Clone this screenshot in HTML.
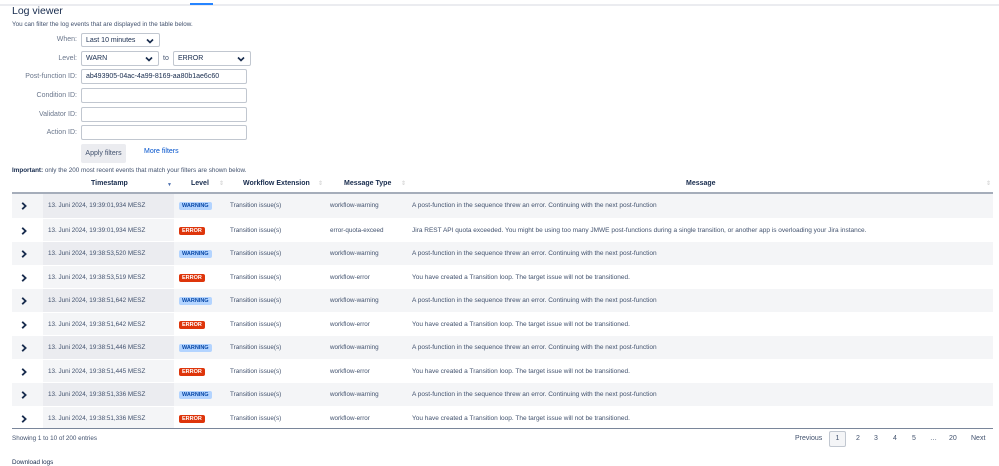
<!DOCTYPE html>
<html><head><meta charset="utf-8"><style>
*{box-sizing:border-box;margin:0;padding:0}
body{width:999px;height:464px;overflow:hidden;background:#fff;font-family:"Liberation Sans",sans-serif;color:#172b4d;position:relative;font-size:7px}
.a{position:absolute;white-space:nowrap}
.lbl{color:#6b778c;text-align:right;width:77px;left:0;font-size:7px}
.box{position:absolute;border:1px solid #c1c7d0;border-radius:2px;background:#fff;height:15px;font-size:7px;line-height:13px;padding-left:4px;color:#172b4d}
.chev{position:absolute;right:5px;top:4px;width:8px;height:6px}
.row{position:absolute;left:12px;width:981px;height:23.5px}
.row.g{background:#f4f5f7}
.row .ts{position:absolute;left:31px;width:131px;height:100%;background:#f4f5f7}
.row.g .ts{background:#ebecf0}
.row span{position:absolute;top:8px;font-size:6.3px;color:#42526e;white-space:nowrap}
.row span.m{font-size:6.5px}
.bw{background:#b3d4ff;color:#0747a6!important;font-weight:bold;padding:0 3px;top:8px!important;height:8px;line-height:8px;font-size:5.5px!important;border-radius:2px}
.be{background:#de350b;color:#fff!important;font-weight:bold;padding:0 3px;height:8px;line-height:8px;font-size:5.5px!important;border-radius:2px}
.hd{font-weight:bold;font-size:7px;color:#172b4d;top:180px}
.pg{top:435px;font-size:7px;color:#42526e}
.ar{position:absolute;left:9px;top:8px}
</style></head><body>
<div class="a" style="left:0;top:4px;width:999px;height:2px;background:#ebecf0"></div>
<div class="a" style="left:190px;top:3px;width:23px;height:2px;background:#2684ff"></div>
<div class="a" style="left:12px;top:5px;font-size:10.5px;color:#172b4d">Log viewer</div>
<div class="a" style="left:12px;top:21px;font-size:6.3px;color:#42526e">You can filter the log events that are displayed in the table below.</div>
<div class="a lbl" style="top:36px">When:</div>
<div class="box" style="left:81px;top:33px;width:79px;height:14px">Last 10 minutes<svg class="chev" viewBox="0 0 8 6"><path d="M1 1.5L4 4.5L7 1.5" fill="none" stroke="#172b4d" stroke-width="1.6"/></svg></div>
<div class="a lbl" style="top:55px">Level:</div>
<div class="box" style="left:81px;top:51px;width:78px">WARN<svg class="chev" viewBox="0 0 8 6"><path d="M1 1.5L4 4.5L7 1.5" fill="none" stroke="#172b4d" stroke-width="1.6"/></svg></div>
<div class="a" style="left:163px;top:55px;color:#42526e">to</div>
<div class="box" style="left:173px;top:51px;width:78px">ERROR<svg class="chev" viewBox="0 0 8 6"><path d="M1 1.5L4 4.5L7 1.5" fill="none" stroke="#172b4d" stroke-width="1.6"/></svg></div>
<div class="a lbl" style="top:73px">Post-function ID:</div>
<div class="box" style="left:81px;top:69px;width:166px">ab493905-04ac-4a99-8169-aa80b1ae6c60</div>
<div class="a lbl" style="top:92px">Condition ID:</div>
<div class="box" style="left:81px;top:88px;width:166px"></div>
<div class="a lbl" style="top:111px">Validator ID:</div>
<div class="box" style="left:81px;top:107px;width:166px"></div>
<div class="a lbl" style="top:129px">Action ID:</div>
<div class="box" style="left:81px;top:125px;width:166px"></div>
<div class="a" style="left:81px;top:144px;width:45px;height:19px;background:#ebecf0;border-radius:2px;text-align:center;line-height:19px;color:#42526e">Apply filters</div>
<div class="a" style="left:144px;top:148px;color:#0052cc">More filters</div>
<div class="a" style="left:12px;top:167px;font-size:6.3px;color:#42526e"><b style="color:#172b4d">Important:</b> only the 200 most recent events that match your filters are shown below.</div>
<div class="a hd" style="left:91px">Timestamp</div><div class="a" style="left:167px;top:182px;font-size:5px;color:#4c6fae">▼</div>
<div class="a hd" style="left:191px">Level</div><div class="a" style="left:219px;top:180px;color:#ccc;font-size:6px">⇕</div>
<div class="a hd" style="left:243px">Workflow Extension</div><div class="a" style="left:318px;top:180px;color:#ccc;font-size:6px">⇕</div>
<div class="a hd" style="left:344px">Message Type</div><div class="a" style="left:401px;top:180px;color:#ccc;font-size:6px">⇕</div>
<div class="a hd" style="left:686px">Message</div><div class="a" style="left:986px;top:180px;color:#ccc;font-size:6px">⇕</div>
<div class="a" style="left:12px;top:192px;width:981px;height:2px;background:#a5adba"></div>
<div id="rows"></div>
<div class="a" style="left:12px;top:428px;width:981px;height:1px;background:#7a869a"></div>
<div class="a" style="left:12px;top:435px;font-size:6.3px;color:#42526e">Showing 1 to 10 of 200 entries</div>
<div class="a" style="left:12px;top:459px;font-size:6.3px;color:#172b4d">Download logs</div>
<div class="a pg" style="left:795px">Previous</div>
<div class="a" style="left:829px;top:431px;width:17px;height:16px;border:1px solid #c1c7d0;background:#f4f5f7;border-radius:2px;text-align:center;line-height:14px;color:#42526e">1</div>
<div class="a pg" style="left:856px">2</div><div class="a pg" style="left:874px">3</div><div class="a pg" style="left:893px">4</div><div class="a pg" style="left:912px">5</div><div class="a pg" style="left:930px">…</div><div class="a pg" style="left:949px">20</div><div class="a pg" style="left:971px">Next</div>
<script>
var d=[["13. Juni 2024, 19:39:01,934 MESZ","W","workflow-warning","A post-function in the sequence threw an error. Continuing with the next post-function"],
["13. Juni 2024, 19:39:01,934 MESZ","E","error-quota-exceed","Jira REST API quota exceeded. You might be using too many JMWE post-functions during a single transition, or another app is overloading your Jira instance."],
["13. Juni 2024, 19:38:53,520 MESZ","W","workflow-warning","A post-function in the sequence threw an error. Continuing with the next post-function"],
["13. Juni 2024, 19:38:53,519 MESZ","E","workflow-error","You have created a Transition loop. The target issue will not be transitioned."],
["13. Juni 2024, 19:38:51,642 MESZ","W","workflow-warning","A post-function in the sequence threw an error. Continuing with the next post-function"],
["13. Juni 2024, 19:38:51,642 MESZ","E","workflow-error","You have created a Transition loop. The target issue will not be transitioned."],
["13. Juni 2024, 19:38:51,446 MESZ","W","workflow-warning","A post-function in the sequence threw an error. Continuing with the next post-function"],
["13. Juni 2024, 19:38:51,445 MESZ","E","workflow-error","You have created a Transition loop. The target issue will not be transitioned."],
["13. Juni 2024, 19:38:51,336 MESZ","W","workflow-warning","A post-function in the sequence threw an error. Continuing with the next post-function"],
["13. Juni 2024, 19:38:51,336 MESZ","E","workflow-error","You have created a Transition loop. The target issue will not be transitioned."]];
var h="";d.forEach(function(r,i){var t=194+i*23.5;h+='<div class="row'+(i%2==0?' g':'')+'" style="top:'+t+'px;'+(i>0?'border-top:1px solid #fff':'')+'"><div class="ts"></div><svg class="ar" width="6" height="8" viewBox="0 0 6 8"><path d="M1.2 0.8L4.6 4L1.2 7.2" fill="none" stroke="#172b4d" stroke-width="1.8"/></svg><span style="left:36px">'+r[0]+'</span><span class="'+(r[1]=="W"?'bw':'be')+'" style="left:167px">'+(r[1]=="W"?'WARNING':'ERROR')+'</span><span style="left:218px">Transition issue(s)</span><span style="left:318px">'+r[2]+'</span><span class="m" style="left:400px">'+r[3]+'</span></div>'});
document.getElementById("rows").innerHTML=h;
</script>
</body></html>
